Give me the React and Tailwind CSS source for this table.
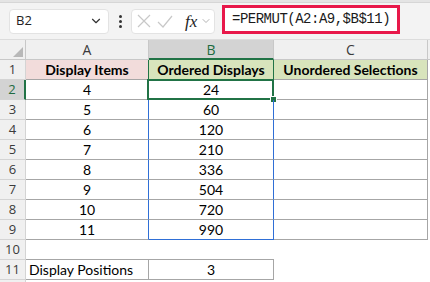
import { ChevronDown } from "lucide-react";

const rowHead =
  "w-[26px] shrink-0 border-r border-b border-[#d4d4d4] bg-[#f0f0f0] flex items-center justify-center text-[13px] text-[#3b3b3b] font-['Open_Sans',sans-serif]";
const cell = "shrink-0 flex items-center justify-center text-[14px] text-black";
const gray = "border-[#a6a6a6]";

const data = [
  [4, 24],
  [5, 60],
  [6, 120],
  [7, 210],
  [8, 336],
  [9, 504],
  [10, 720],
  [11, 990],
];

function Toolbar() {
  return (
    <div className="h-[40px] bg-[#f3f3f3] border-b border-[#dcdcdc] relative">
      <div className="h-[3px] bg-[#e4e4e4] border-b border-[#d6d6d6]" />
      <div className="flex items-center pl-[9px] pt-[5px]">
        <div className="w-[100px] h-[25px] bg-white rounded-[4px] border border-[#e3e3e3] flex items-center justify-between pl-[6px] pr-[5px]">
          <span className="text-[13px] text-[#222] font-['Open_Sans',sans-serif]">B2</span>
          <ChevronDown size={14} strokeWidth={2} className="text-[#333]" />
        </div>
        <div className="w-[22px] flex flex-col items-center gap-[2px]">
          <span className="w-[3px] h-[3px] bg-[#333] rounded-full" />
          <span className="w-[3px] h-[3px] bg-[#333] rounded-full" />
          <span className="w-[3px] h-[3px] bg-[#333] rounded-full" />
        </div>
        <div className="w-[84px] h-[25px] bg-white rounded-[4px] border border-[#e3e3e3] flex items-center pl-[4px] gap-[6px]">
          <svg width="14" height="14" viewBox="0 0 14 14" className="ml-[1px]">
            <path d="M1 1 L13 13 M13 1 L1 13" stroke="#c8c8c8" strokeWidth="1.2" fill="none" />
          </svg>
          <svg width="16" height="14" viewBox="0 0 16 14">
            <path d="M1 8 L6 13 L15 2" stroke="#c8c8c8" strokeWidth="1.2" fill="none" />
          </svg>
          <span className="ml-[6px] italic text-[17px] leading-none text-[#222] font-['Liberation_Serif',serif]">
            fx
          </span>
          <ChevronDown size={12} strokeWidth={1.5} className="text-[#999] -ml-[3px]" />
        </div>
        <div className="ml-[7px] -mt-[3px] w-[178px] h-[29px] bg-white border-[3px] border-[#e8184a] flex items-center pl-[7px]">
          <span className="text-[14px] tracking-[-0.5px] text-[#1a1a1a] font-['Liberation_Mono',monospace]">
            =PERMUT(A2:A9,$B$11)
          </span>
        </div>
      </div>
    </div>
  );
}

function HeaderRow() {
  return (
    <div className="flex h-[20px] bg-[#f0f0f0] text-[14px] text-[#3b3b3b] font-['Open_Sans',sans-serif]">
      <div className="w-[26px] shrink-0 border-r border-b border-[#c8c8c8] relative">
        <svg width="10" height="10" viewBox="0 0 10 10" className="absolute right-[2px] bottom-[2px]">
          <path d="M10 0 L10 10 L0 10 Z" fill="#b8b8b8" />
        </svg>
      </div>
      <div className="w-[123px] shrink-0 border-r border-b border-[#c8c8c8] flex items-center justify-center">A</div>
      <div className="w-[125px] shrink-0 border-r border-[#c8c8c8] border-b-2 border-b-[#217346] bg-[#d3d3d3] flex items-center justify-center text-[#1e6b40]">
        B
      </div>
      <div className="w-[154px] shrink-0 border-r border-b border-[#c8c8c8] flex items-center justify-center">C</div>
      <div className="flex-1 border-b border-[#c8c8c8]" />
    </div>
  );
}

export default function App() {
  return (
    <div className="w-[430px] h-[282px] overflow-hidden bg-white font-['Lato',sans-serif]">
      <Toolbar />
      <HeaderRow />

      {/* row 1 */}
      <div className="flex h-[20px]">
        <div className={rowHead}>1</div>
        <div className={`${cell} w-[123px] border-r border-b border-r-[#217346] ${gray} bg-[#f2dcdb] font-bold text-[#14142e]`}>
          Display Items
        </div>
        <div className={`${cell} w-[125px] border-r border-b border-r-[#217346] ${gray} bg-[#d8e4bc] font-bold text-[#14142e]`}>
          Ordered Displays
        </div>
        <div className={`${cell} w-[154px] border-r border-b ${gray} bg-[#d8e4bc] font-bold text-[#14142e]`}>
          Unordered Selections
        </div>
      </div>

      {data.map(([a, b], i) => {
        const r = i + 2;
        const sel = r === 2;
        const last = r === 9;
        return (
          <div key={r} className="flex h-[20px]">
            <div
              className={
                sel
                  ? "w-[26px] shrink-0 border-r-2 border-r-[#217346] border-b border-b-[#d4d4d4] bg-[#d3d3d3] flex items-center justify-center text-[13px] text-[#1e6b40] font-['Open_Sans',sans-serif]"
                  : rowHead
              }
            >
              {r}
            </div>
            <div className={`${cell} w-[123px] border-r border-b ${gray} ${sel ? "border-r-[#217346]" : "border-r-[#2f6fd6]"}`}>
              {a}
            </div>
            <div
              className={`${cell} w-[125px] border-r border-b ${gray} relative ${sel ? "border-r-[#217346]" : "border-r-[#2f6fd6]"} ${last ? "border-b-[#2f6fd6]" : ""}`}
            >
              {b}
              {sel && (
                <div className="absolute left-[-2px] top-[-1px] right-[-1px] bottom-[-1px] border-2 border-[#217346]">
                  <div className="absolute right-[-5px] bottom-[-5px] w-[7px] h-[7px] bg-[#217346] border border-white" />
                </div>
              )}
            </div>
            <div className={`${cell} w-[154px] border-r border-b ${gray}`} />
          </div>
        );
      })}

      {/* row 10 */}
      <div className="flex h-[20px]">
        <div className={rowHead}>10</div>
        <div className={`${cell} w-[123px] border-b ${gray}`} />
        <div className={`${cell} w-[125px] border-b ${gray}`} />
      </div>

      {/* row 11 */}
      <div className="flex h-[20px]">
        <div className={rowHead}>11</div>
        <div className={`${cell} w-[123px] border-r border-b ${gray} justify-start pl-[3px]`}>Display Positions</div>
        <div className={`${cell} w-[125px] border-r border-b ${gray}`}>3</div>
      </div>
      <div className="flex h-[2px]">
        <div className="w-[26px] bg-[#f0f0f0] border-r border-[#d4d4d4]" />
      </div>
    </div>
  );
}
